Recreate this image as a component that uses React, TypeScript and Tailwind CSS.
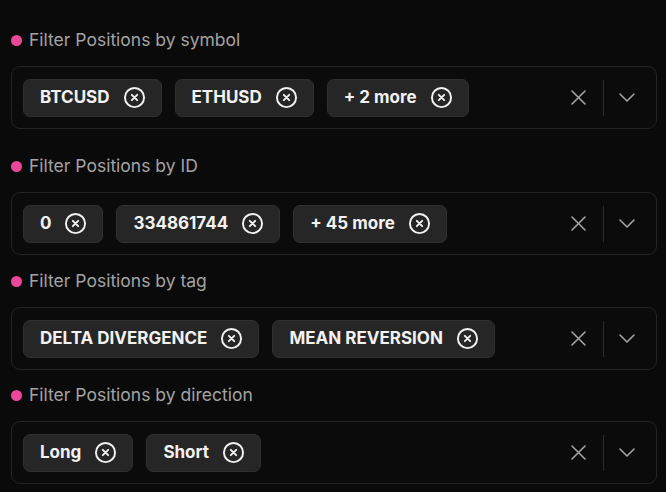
import type { ReactNode } from 'react'

type Filter = {
  label: string
  chips: string[]
  gap: string
}

const filters: Filter[] = [
  { label: 'Filter Positions by symbol', chips: ['BTCUSD', 'ETHUSD', '+ 2 more'], gap: 'mt-0' },
  { label: 'Filter Positions by ID', chips: ['0', '334861744', '+ 45 more'], gap: 'mt-[25px]' },
  { label: 'Filter Positions by tag', chips: ['DELTA DIVERGENCE', 'MEAN REVERSION'], gap: 'mt-[14px]' },
  { label: 'Filter Positions by direction', chips: ['Long', 'Short'], gap: 'mt-[13px]' },
]

function CircleX() {
  return (
    <svg width="23" height="23" viewBox="0 0 24 24" fill="none" stroke="currentColor" strokeWidth="2" strokeLinecap="round">
      <circle cx="12" cy="12" r="10" />
      <path d="M9.2 9.2l5.6 5.6M14.8 9.2l-5.6 5.6" />
    </svg>
  )
}

function Chip({ children }: { children: ReactNode }) {
  return (
    <div className="flex h-[38px] items-center gap-[13px] rounded-[7px] border border-[#303030] bg-[#262626] pl-[16px] pr-[15px] text-[17px] font-bold text-[#f2f2f2]">
      <span>{children}</span>
      <span className="text-[#f2f2f2]">
        <CircleX />
      </span>
    </div>
  )
}

export default function App() {
  return (
    <div className="flex min-h-[492px] flex-col bg-[#0a0a0a] pl-[11px] pr-[9px] pt-[28px] pb-[8px]" style={{ fontFamily: 'Inter, "Noto Sans", sans-serif' }}>
      {filters.map((f) => (
        <section key={f.label} className={f.gap}>
          {/* label */}
          <div className="flex h-6 items-center gap-[7px] text-[17.5px] text-[#a3a3a3]">
            <span className="h-[11px] w-[11px] rounded-full bg-[#ec4899]" />
            <span>{f.label}</span>
          </div>

          {/* multi select */}
          <div className="mt-[14px] flex h-[63px] items-center rounded-[9px] border border-[#242424] bg-[#0b0b0b] pl-[11px] pr-[21px]">
            <div className="flex flex-1 items-center gap-[13px]">
              {f.chips.map((c) => (
                <Chip key={c}>{c}</Chip>
              ))}
            </div>
            <svg width="15" height="15" viewBox="0 0 15 15" fill="none" stroke="#a3a3a3" strokeWidth="1.6" strokeLinecap="round">
              <path d="M1 1l13 13M14 1L1 14" />
            </svg>
            <div className="ml-[17px] h-[36px] w-px bg-[#2c2c2c]" />
            <svg className="ml-[15px]" width="16" height="9" viewBox="0 0 16 9" fill="none" stroke="#a3a3a3" strokeWidth="1.6" strokeLinecap="round" strokeLinejoin="round">
              <path d="M1 1l7 7 7-7" />
            </svg>
          </div>
        </section>
      ))}
    </div>
  )
}
